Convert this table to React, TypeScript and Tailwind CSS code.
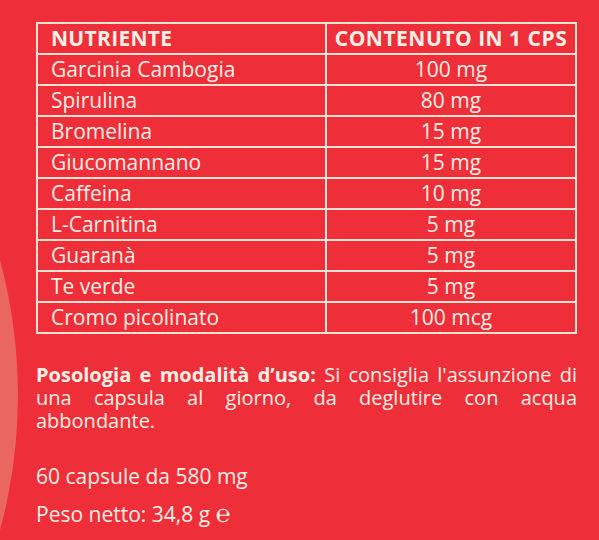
const rows: [string, string][] = [
  ["Garcinia Cambogia", "100 mg"],
  ["Spirulina", "80 mg"],
  ["Bromelina", "15 mg"],
  ["Giucomannano", "15 mg"],
  ["Caffeina", "10 mg"],
  ["L-Carnitina", "5 mg"],
  ["Guaranà", "5 mg"],
  ["Te verde", "5 mg"],
  ["Cromo picolinato", "100 mcg"],
];

export default function App() {
  return (
    <div
      className="relative w-[599px] h-[540px] overflow-hidden bg-[#ee2e38] text-[#fcefe6]"
      style={{ fontFamily: "'Open Sans', 'Noto Sans', sans-serif" }}
    >
      {/* decorative arc on the left edge */}
      <div className="absolute left-[-1012px] top-[-120px] w-[1030px] h-[1030px] rounded-full bg-[#ea6660]" />

      <div className="relative pt-[22px] pl-[36px]">
        <table className="w-[541px] border-collapse text-[21px]">
          <thead>
            <tr>
              <th className="h-[31px] w-[289px] border-2 border-[#f6e2d2] pl-[13px] text-left font-bold leading-none tracking-[0.3px]">
                NUTRIENTE
              </th>
              <th className="h-[31px] border-2 border-[#f6e2d2] text-center font-bold leading-none tracking-[0.5px]">
                CONTENUTO IN 1 CPS
              </th>
            </tr>
          </thead>
          <tbody>
            {rows.map(([name, qty]) => (
              <tr key={name}>
                <td className="h-[31px] border-2 border-[#f6e2d2] pl-[13px] leading-none">{name}</td>
                <td className="h-[31px] border-2 border-[#f6e2d2] text-center leading-none">{qty}</td>
              </tr>
            ))}
          </tbody>
        </table>

        <p className="mt-[29px] w-[541px] text-justify text-[20px] leading-[23px]">
          <span className="font-bold">Posologia e modalità d’uso:</span> Si consiglia l'assunzione di una
          capsula al giorno, da deglutire con acqua abbondante.
        </p>

        <div className="mt-[33px] flex flex-col gap-[13px] text-[21px] leading-[23px]">
          <p>60 capsule da 580 mg</p>
          <p>
            Peso netto: 34,8 g <span className="text-[25px]">℮</span>
          </p>
        </div>
      </div>
    </div>
  );
}
